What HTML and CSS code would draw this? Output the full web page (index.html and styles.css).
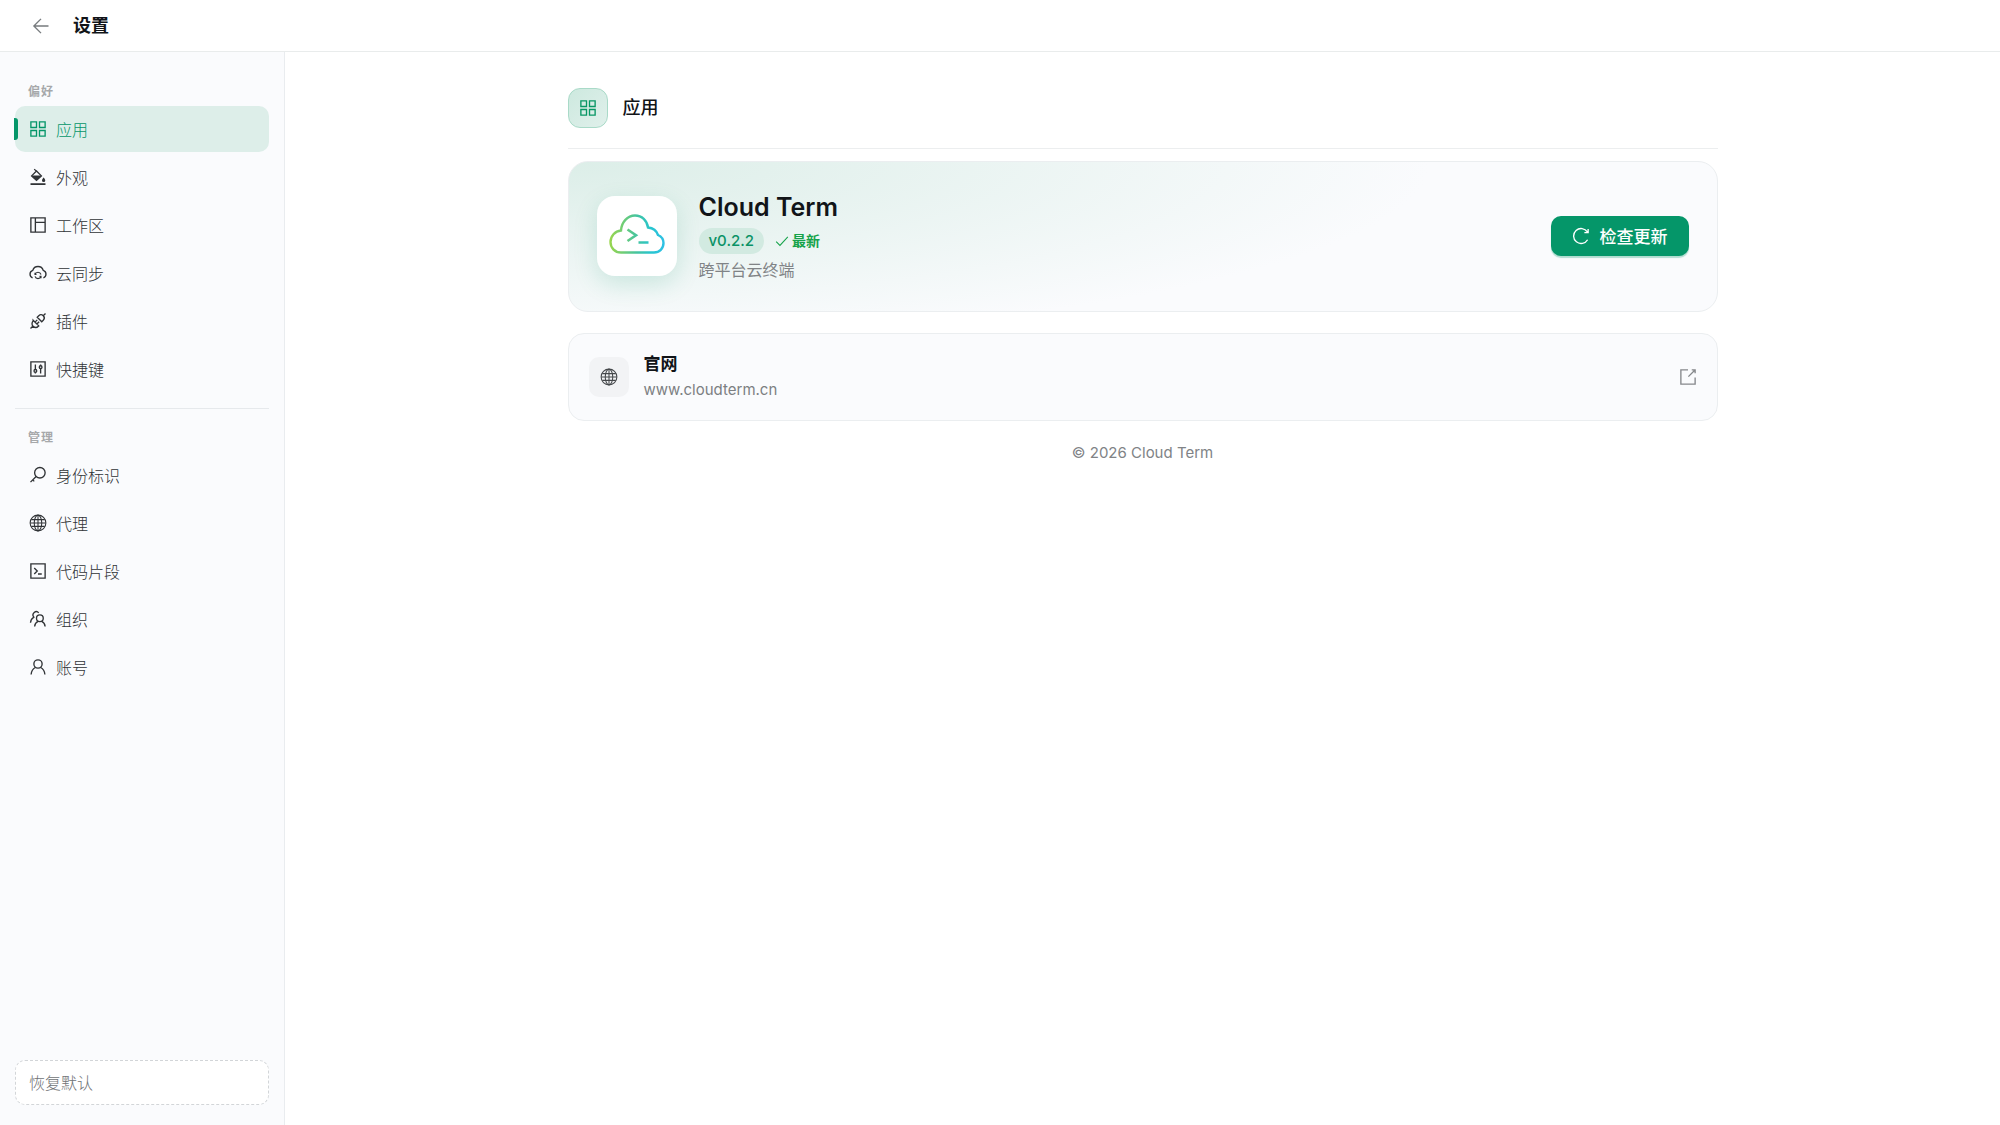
FILE: index.html
```html
<!DOCTYPE html>
<html lang="zh-CN">
  <head>
    <meta charset="UTF-8" />
    <meta name="viewport" content="width=device-width, initial-scale=1.0" />
    <title>设置</title>
    <link rel="stylesheet" href="styles.css">
  </head>

  <body>
    <header class="topbar">
      <button class="back" type="button" aria-label="返回">
        <svg class="icon" viewBox="0 0 24 24"><path d="M22 12H3M12 2.500L2.500 12l9.500 9.500" /></svg>
      </button>
      <h1>设置</h1>
    </header>

    <div class="layout">
      <aside class="sidebar">
        <nav>
          <h2 class="group-title">偏好</h2>
          <ul class="menu">
            <li>
              <a class="menu-item active" href="#app">
                <svg class="icon" viewBox="0 0 24 24"><path d="M2.500 2.500h7.500v7.500H2.500zM14 2.500h7.500v7.500H14zM2.500 14h7.500v7.500H2.500zM14 14h7.500v7.500H14z" /></svg>
                应用
              </a>
            </li>
            <li>
              <a class="menu-item" href="#appearance">
                <svg class="icon" viewBox="0 0 24 24">
                  <path d="M2 21.500h20" stroke-width="2.400" />
                  <path d="M7 1.500l3 3M10 4L3.500 10.500l6.500 6 6.500-6z" />
                  <path class="solid" d="M3.500 10h13L10 16.500zM19.500 12.500s2.200 2.600 2.200 4a2.200 2.200 0 0 1-4.400 0c0-1.400 2.200-4 2.200-4z" stroke="none" />
                </svg>
                外观
              </a>
            </li>
            <li>
              <a class="menu-item" href="#workspace">
                <svg class="icon" viewBox="0 0 24 24"><path d="M2.500 2.500h19v19h-19zM8.500 2.500v19M8.500 8.500h13" /></svg>
                工作区
              </a>
            </li>
            <li>
              <a class="menu-item" href="#sync">
                <svg class="icon" viewBox="0 0 24 24">
                  <path d="M4.800 18.500A5.300 5.300 0 0 1 5 8.500a7.300 7.300 0 0 1 14 0a5.300 5.300 0 0 1 .2 10" />
                  <path d="M8 14a4.200 4.200 0 0 1 8 0M16 16.500a4.200 4.200 0 0 1-8 0M8 11.500V14h2M16 19v-2.500h-2" stroke-width="1.500" />
                </svg>
                云同步
              </a>
            </li>
            <li>
              <a class="menu-item" href="#plugins">
                <svg class="icon" viewBox="0 0 24 24">
                  <path d="M2 22l3-3M19 5l3-3M11 7l6 6 2-2c1.800-1.800 1.800-4.200 0-6s-4.200-1.800-6 0zM5.500 11l7.500 7.500-.5.500c-1.900 1.900-5 1.900-7 0s-1.900-5 0-7zM8 13.500l3-3M10.500 16l3-3" />
                </svg>
                插件
              </a>
            </li>
            <li>
              <a class="menu-item" href="#shortcuts">
                <svg class="icon" viewBox="0 0 24 24">
                  <path d="M2.500 2.500h19v19h-19zM8.500 6v6.500M8.500 16.500V18M15.500 6v1.500M15.500 11.500V18" />
                  <circle cx="8.500" cy="14.500" r="1.800" /><circle cx="15.500" cy="9.500" r="1.800" />
                </svg>
                快捷键
              </a>
            </li>
          </ul>

          <h2 class="group-title divided">管理</h2>
          <ul class="menu">
            <li>
              <a class="menu-item" href="#identity">
                <svg class="icon" viewBox="0 0 24 24"><circle cx="14.500" cy="9" r="7" /><path d="M9.500 14L2 21.500M5 18.500l2 2" /></svg>
                身份标识
              </a>
            </li>
            <li>
              <a class="menu-item" href="#proxy">
                <svg class="icon globe" viewBox="0 0 24 24">
                  <circle cx="12" cy="12" r="10.500" /><ellipse cx="12" cy="12" rx="5" ry="10.500" />
                  <path d="M12 1.500v21M1.500 12h21M3 7.500h18M3 16.500h18" />
                </svg>
                代理
              </a>
            </li>
            <li>
              <a class="menu-item" href="#snippets">
                <svg class="icon" viewBox="0 0 24 24"><path d="M2.500 2.500h19v19h-19zM7 8l4 4-4 4M12 16h5" /></svg>
                代码片段
              </a>
            </li>
            <li>
              <a class="menu-item" href="#team">
                <svg class="icon" viewBox="0 0 24 24">
                  <circle cx="14.500" cy="11" r="4.500" />
                  <path d="M7.500 22c.3-3.500 2-5.500 4.500-6.800M17 15.200c2.500 1.300 4.200 3.300 4.500 6.800M13 3.800A4.300 4.300 0 1 0 6.500 9.500C4 11 2.300 13.500 2 17" />
                </svg>
                组织
              </a>
            </li>
            <li>
              <a class="menu-item" href="#account">
                <svg class="icon" viewBox="0 0 24 24"><circle cx="12" cy="8" r="5.500" /><path d="M2.800 22c.4-4.500 2.400-7.500 5.700-9.300M21.200 22c-.4-4.500-2.400-7.500-5.700-9.300" /></svg>
                账号
              </a>
            </li>
          </ul>
        </nav>
        <button class="reset" type="button">恢复默认</button>
      </aside>

      <main class="content">
        <div class="page">
          <div class="page-head">
            <span class="page-icon">
              <svg class="icon" viewBox="0 0 24 24"><path d="M2.500 2.500h7.500v7.500H2.500zM14 2.500h7.500v7.500H14zM2.500 14h7.500v7.500H2.500zM14 14h7.500v7.500H14z" /></svg>
            </span>
            <h2>应用</h2>
          </div>

          <section class="card hero">
            <div class="logo">
              <svg viewBox="0 0 56 40">
                <defs>
                  <linearGradient id="cloud" gradientUnits="userSpaceOnUse" x1="0" y1="20" x2="56" y2="20">
                    <stop offset="0" stop-color="#9bd64b" />
                    <stop offset="0.5" stop-color="#45c4a0" />
                    <stop offset="0.75" stop-color="#27c5cf" />
                    <stop offset="1" stop-color="#2fc0e6" />
                  </linearGradient>
                </defs>
                <path d="M12 38.500C5.500 38.500 1.500 33.500 1.500 28C1.500 22 6 17 12 16.500C12.500 8 18.500 1.500 26 1.500C33 1.500 38 6.500 39 13.500C44 14 47.500 16.500 49 21C52.500 22.500 54.500 25.500 54.500 29C54.500 34.500 50.500 38.500 45 38.500Z" />
                <path d="M18.500 15.500l8.500 5.800-8.500 5.700M29.500 28.500h10" stroke-width="2.600" />
              </svg>
            </div>
            <div class="info">
              <h3>Cloud Term</h3>
              <div class="status">
                <span class="version">v0.2.2</span>
                <span class="latest">
                  <svg class="icon" viewBox="0 0 24 24"><path d="M2 13l6.500 6.500L22 5" /></svg>
                  最新
                </span>
              </div>
              <p>跨平台云终端</p>
            </div>
            <button class="update" type="button">
              <svg class="icon" viewBox="0 0 24 24"><path d="M20.800 17A10 10 0 1 1 20.500 6.500M21.500 2.500v5h-5" /></svg>
              检查更新
            </button>
          </section>

          <a class="card site" href="#website">
            <span class="site-icon">
              <svg class="icon globe" viewBox="0 0 24 24">
                <circle cx="12" cy="12" r="10.500" /><ellipse cx="12" cy="12" rx="5" ry="10.500" />
                <path d="M12 1.500v21M1.500 12h21M3 7.500h18M3 16.500h18" />
              </svg>
            </span>
            <span class="site-text">
              <strong>官网</strong>
              <span>www.cloudterm.cn</span>
            </span>
            <svg class="icon external" viewBox="0 0 24 24"><path d="M12 2.500H2.500v19h19V12.500M12.500 11.500l8.500-8.500M17 2.500h4.500V7" /></svg>
          </a>

          <footer>© 2026 Cloud Term</footer>
        </div>
      </main>
    </div>
  </body>
</html>
```
FILE: styles.css
```css
* {
  box-sizing: border-box;
}

body {
  display: flex;
  flex-direction: column;
  min-height: 100vh;
  margin: 0;
  background: #fff;
  color: #111418;
  font-family: Inter, "Noto Sans CJK SC", sans-serif;
  font-size: 16px;
}

h1,
h2,
h3,
p,
ul {
  margin: 0;
  padding: 0;
}

ul {
  list-style: none;
}

a {
  color: inherit;
  text-decoration: none;
}

button {
  font: inherit;
  cursor: pointer;
}

.icon {
  flex: none;
  width: 18px;
  height: 18px;
  fill: none;
  stroke: currentColor;
  stroke-width: 1.8;
}

.icon .solid {
  fill: currentColor;
}

.icon.globe {
  stroke-width: 1.4;
}

/* header */
.topbar {
  display: flex;
  align-items: center;
  gap: 16px;
  height: 52px;
  padding: 0 25px;
  border-bottom: 1px solid #e9ecec;
}

.back {
  display: flex;
  align-items: center;
  justify-content: center;
  width: 32px;
  height: 32px;
  padding: 0;
  border: 0;
  background: none;
  color: #777b7e;
}

.topbar h1 {
  font-size: 18px;
  font-weight: 600;
  line-height: 28px;
}

.layout {
  display: flex;
  flex: 1;
}

/* sidebar */
.sidebar {
  display: flex;
  flex-direction: column;
  justify-content: space-between;
  flex: none;
  width: 285px;
  padding: 32px 15px 20px;
  border-right: 1px solid #e9ecef;
  background: #fafbfd;
}

.group-title {
  padding: 0 13px 6px;
  color: #a6a8aa;
  font-size: 12px;
  font-weight: 600;
  line-height: 16px;
  letter-spacing: 1px;
}

.group-title.divided {
  margin-top: 16px;
  padding-top: 21px;
  border-top: 1px solid #e6e9ec;
}

.menu {
  display: flex;
  flex-direction: column;
  gap: 2px;
}

.menu-item {
  position: relative;
  display: flex;
  align-items: center;
  gap: 9px;
  height: 46px;
  padding: 0 14px;
  border-radius: 10px;
  color: #303336;
  font-weight: 300;
}

.menu-item.active {
  background: #ddeee9;
  color: #059669;
}

.menu-item.active::before {
  content: "";
  position: absolute;
  top: 12px;
  left: -1px;
  width: 4px;
  height: 22px;
  border-radius: 0 3px 3px 0;
  background: #059669;
}

.reset {
  height: 45px;
  padding: 0 13px;
  border: 1px dashed #d2d5d8;
  border-radius: 10px;
  background: #fff;
  color: #707376;
  font-weight: 300;
  line-height: 20px;
  text-align: left;
}

/* content */
.content {
  flex: 1;
  padding: 36px 24px;
}

.page {
  display: flex;
  flex-direction: column;
  max-width: 1150px;
  margin: 0 auto;
}

.page-head {
  display: flex;
  align-items: center;
  gap: 15px;
  margin-bottom: 12px;
  padding-bottom: 20px;
  border-bottom: 1px solid #eceeef;
}

.page-icon {
  display: flex;
  align-items: center;
  justify-content: center;
  width: 40px;
  height: 40px;
  border: 1px solid #a9dac8;
  border-radius: 12px;
  background: linear-gradient(135deg, #cde9df, #e0f0eb);
  color: #089765;
}

.page-head h2 {
  font-size: 18px;
  font-weight: 500;
  line-height: 28px;
}

.card {
  display: flex;
  align-items: center;
  border: 1px solid #ebeef0;
  background: #fafbfd;
}

.hero {
  gap: 22px;
  min-height: 151px;
  margin-bottom: 21px;
  padding: 22px 28px 24px;
  border-radius: 20px;
  background: radial-gradient(ellipse 75% 120% at 0 0, #dceee8, #fafbfd);
}

.logo {
  display: flex;
  align-items: center;
  justify-content: center;
  width: 80px;
  height: 80px;
  border-radius: 18px;
  background: #fff;
  box-shadow: 0 8px 24px rgba(5, 150, 105, 0.16);
}

.logo svg {
  width: 56px;
  height: 40px;
  margin-bottom: 4px;
  fill: none;
  stroke: url(#cloud);
  stroke-width: 2.4;
}

.info {
  display: flex;
  flex: 1;
  flex-direction: column;
  gap: 4px;
}

.info h3 {
  font-size: 25px;
  font-weight: 600;
  line-height: 34px;
}

.status {
  display: flex;
  align-items: center;
  gap: 11px;
}

.version {
  padding: 0 10px;
  border-radius: 13px;
  background: #d2eae1;
  color: #0b9266;
  font-size: 15px;
  font-weight: 500;
  line-height: 26px;
}

.latest {
  display: flex;
  align-items: center;
  gap: 3px;
  color: #16a34a;
  font-size: 14px;
  font-weight: 600;
  line-height: 20px;
}

.latest .icon {
  width: 14px;
  height: 14px;
}

.info p {
  color: #808386;
  font-size: 16px;
  line-height: 24px;
}

.update {
  display: flex;
  align-items: center;
  gap: 10px;
  height: 40px;
  padding: 0 21px;
  border: 0;
  border-radius: 10px;
  background: #059669;
  box-shadow: 0 2px 1px rgba(5, 150, 105, 0.3);
  color: #fff;
  font-size: 17px;
  font-weight: 500;
}

.site {
  gap: 15px;
  min-height: 88px;
  padding: 16px 20px;
  border-radius: 16px;
}

.site-icon {
  display: flex;
  align-items: center;
  justify-content: center;
  width: 40px;
  height: 40px;
  border-radius: 10px;
  background: #f2f3f5;
  color: #45484b;
}

.site-text {
  display: flex;
  flex: 1;
  flex-direction: column;
  color: #7c7f82;
  font-size: 15px;
  line-height: 25px;
}

.site-text strong {
  color: #111418;
  font-size: 17px;
  font-weight: 600;
}

.external {
  color: #85888b;
}

footer {
  margin-top: 20px;
  color: #808386;
  font-size: 15px;
  line-height: 24px;
  text-align: center;
}
```
